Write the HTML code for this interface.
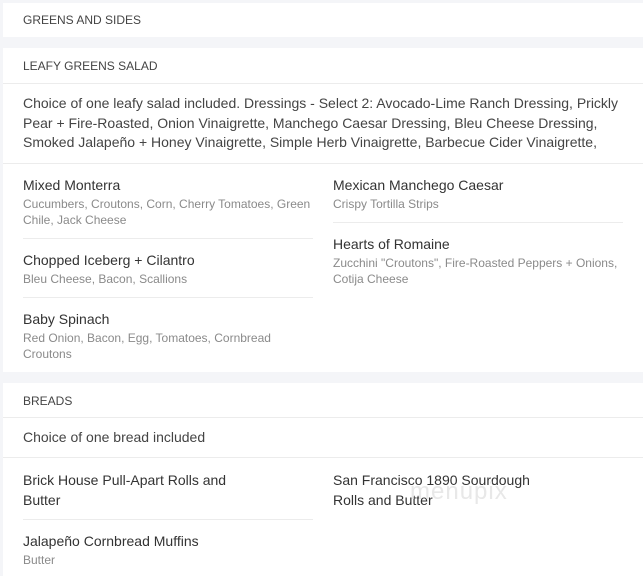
<!DOCTYPE html>
<html><head><meta charset="utf-8"><style>
*{margin:0;padding:0;box-sizing:border-box}
body{width:643px;height:576px;background:#f4f5f8;font-family:"Liberation Sans",Arial,sans-serif;position:relative;overflow:hidden}
.card{position:absolute;left:3px;right:0;background:#fff}
.t{position:absolute;white-space:nowrap}
.h{font-size:12px;color:#444;line-height:14px}
.p{font-size:14px;color:#444;line-height:19.5px}
.n{font-size:14px;color:#333;line-height:20px}
.d{font-size:12px;color:#8a8a8a;line-height:16px}
.hl{position:absolute;height:1px;background:#ececec}
</style></head><body>
<div class="card" style="top:3px;height:34px"></div>
<div class="card" style="top:48px;height:324px"></div>
<div class="card" style="top:383px;height:193px"></div>

<div class="t h" style="left:23px;top:13px">GREENS AND SIDES</div>

<div class="t h" style="left:23px;top:59px">LEAFY GREENS SALAD</div>
<div class="hl" style="left:3px;right:0;top:83px"></div>
<div class="t p" style="left:23px;top:94px">Choice of one leafy salad included. Dressings - Select 2: Avocado-Lime Ranch Dressing, Prickly<br>Pear + Fire-Roasted, Onion Vinaigrette, Manchego Caesar Dressing, Bleu Cheese Dressing,<br>Smoked Jalapeño + Honey Vinaigrette, Simple Herb Vinaigrette, Barbecue Cider Vinaigrette,</div>
<div class="hl" style="left:3px;right:0;top:163px"></div>

<div class="t n" style="left:23px;top:175px">Mixed Monterra</div>
<div class="t d" style="left:23px;top:196px">Cucumbers, Croutons, Corn, Cherry Tomatoes, Green<br>Chile, Jack Cheese</div>
<div class="hl" style="left:23px;width:290px;top:238px"></div>
<div class="t n" style="left:23px;top:250px">Chopped Iceberg + Cilantro</div>
<div class="t d" style="left:23px;top:271px">Bleu Cheese, Bacon, Scallions</div>
<div class="hl" style="left:23px;width:290px;top:297px"></div>
<div class="t n" style="left:23px;top:309px">Baby Spinach</div>
<div class="t d" style="left:23px;top:330px">Red Onion, Bacon, Egg, Tomatoes, Cornbread<br>Croutons</div>

<div class="t n" style="left:333px;top:175px">Mexican Manchego Caesar</div>
<div class="t d" style="left:333px;top:196px">Crispy Tortilla Strips</div>
<div class="hl" style="left:333px;width:290px;top:222px"></div>
<div class="t n" style="left:333px;top:234px">Hearts of Romaine</div>
<div class="t d" style="left:333px;top:255px">Zucchini "Croutons", Fire-Roasted Peppers + Onions,<br>Cotija Cheese</div>

<div class="t h" style="left:23px;top:394px">BREADS</div>
<div class="hl" style="left:3px;right:0;top:417px"></div>
<div class="t p" style="left:23px;top:428px">Choice of one bread included</div>
<div class="hl" style="left:3px;right:0;top:457px"></div>
<div class="t n" style="left:23px;top:470px;line-height:20px">Brick House Pull-Apart Rolls and<br>Butter</div>
<div class="hl" style="left:23px;width:290px;top:519px"></div>
<div class="t n" style="left:23px;top:531px">Jalapeño Cornbread Muffins</div>
<div class="t d" style="left:23px;top:552px">Butter</div>
<div class="t n" style="left:333px;top:470px;line-height:20px">San Francisco 1890 Sourdough<br>Rolls and Butter</div>
<div class="t" style="left:410px;top:478px;font-size:24px;color:#e8e8e8;letter-spacing:1px">menupix</div>
</body></html>
